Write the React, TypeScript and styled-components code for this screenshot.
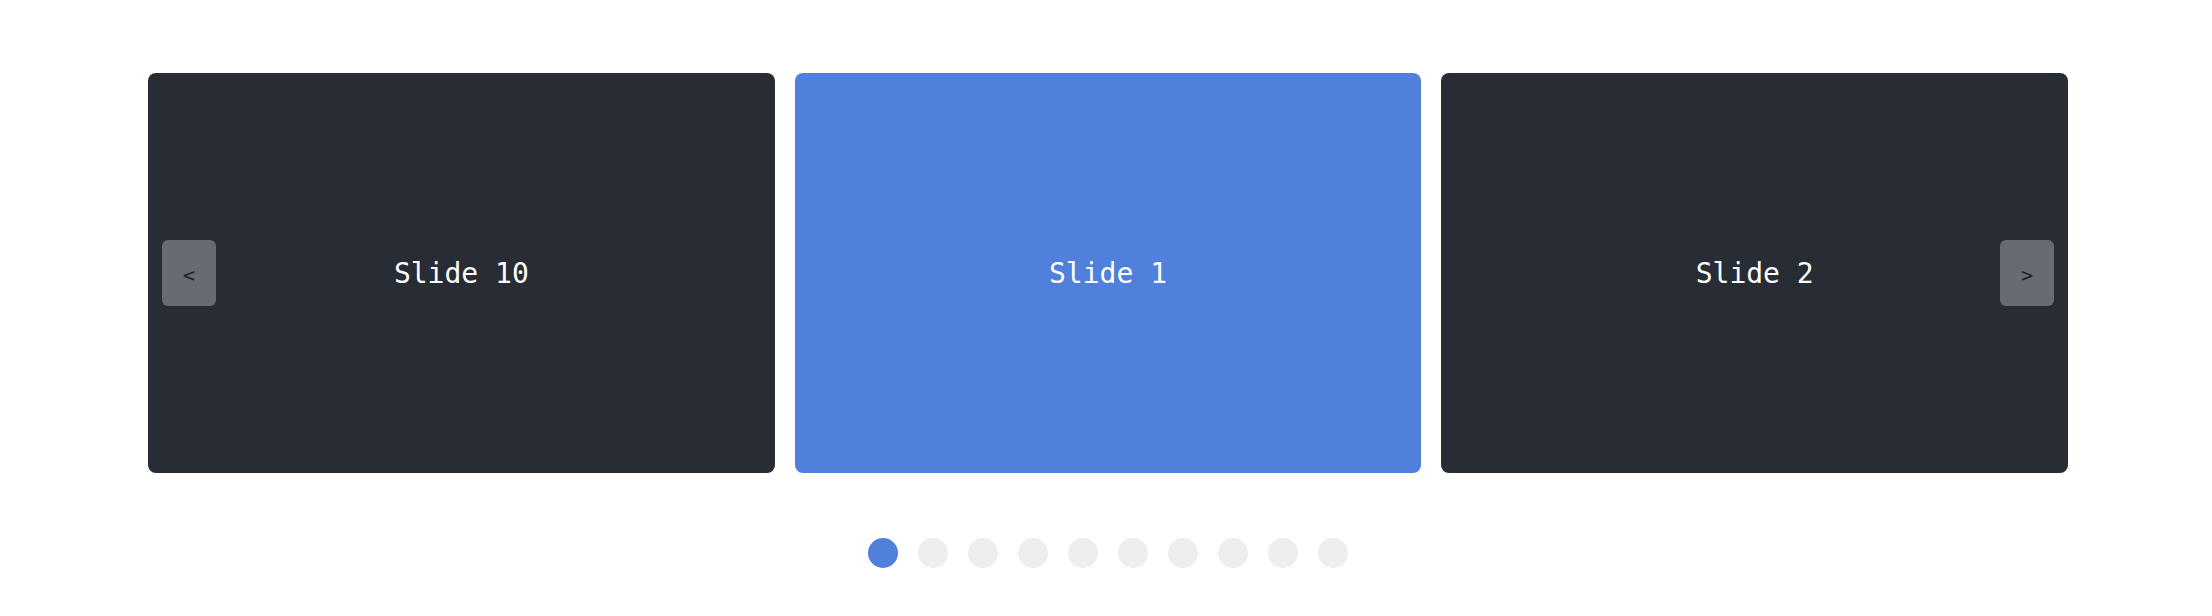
import React from "react";
import styled, { createGlobalStyle } from "styled-components";

const GlobalStyle = createGlobalStyle`
  html, body {
    margin: 0;
    padding: 0;
    background: #ffffff;
  }
  body {
    font-family: "DejaVu Sans Mono", "Liberation Mono", monospace;
  }
`;

const Page = styled.div`
  padding-top: 73px;
  padding-left: 148px;
`;

const Carousel = styled.div`
  position: relative;
  width: 1920px;
`;

const Track = styled.div`
  display: flex;
  gap: 20px;
`;

const Slide = styled.div<{ $active?: boolean }>`
  flex: 1 1 0;
  height: 400px;
  border-radius: 8px;
  background: ${(p) => (p.$active ? "#5080dc" : "#282c34")};
  color: #ffffff;
  display: flex;
  align-items: center;
  justify-content: center;
  font-family: "DejaVu Sans Mono", monospace;
  font-size: 28px;
`;

const NavButton = styled.button<{ $side: "left" | "right" }>`
  position: absolute;
  top: 167px;
  ${(p) => (p.$side === "left" ? "left: 14px;" : "right: 14px;")}
  width: 54px;
  height: 66px;
  border: none;
  border-radius: 6px;
  background: rgba(255, 255, 255, 0.3);
  color: #1e2126;
  font-family: "DejaVu Sans Mono", monospace;
  font-size: 20px;
  padding: 4px 0 0;
  display: flex;
  align-items: center;
  justify-content: center;
  cursor: pointer;
`;

const Dots = styled.div`
  display: flex;
  justify-content: center;
  gap: 20px;
  margin-top: 65px;
`;

const Dot = styled.span<{ $active?: boolean }>`
  width: 30px;
  height: 30px;
  border-radius: 50%;
  background: ${(p) => (p.$active ? "#5080dc" : "#eeeeee")};
`;

export default function App() {
  const slides = [
    { label: "Slide 10", active: false },
    { label: "Slide 1", active: true },
    { label: "Slide 2", active: false },
  ];
  return (
    <>
      <GlobalStyle />
      <Page>
        <Carousel>
          <Track>
            {slides.map((s) => (
              <Slide key={s.label} $active={s.active}>
                {s.label}
              </Slide>
            ))}
          </Track>
          <NavButton $side="left">&lt;</NavButton>
          <NavButton $side="right">&gt;</NavButton>
          <Dots>
            {Array.from({ length: 10 }).map((_, i) => (
              <Dot key={i} $active={i === 0} />
            ))}
          </Dots>
        </Carousel>
      </Page>
    </>
  );
}
